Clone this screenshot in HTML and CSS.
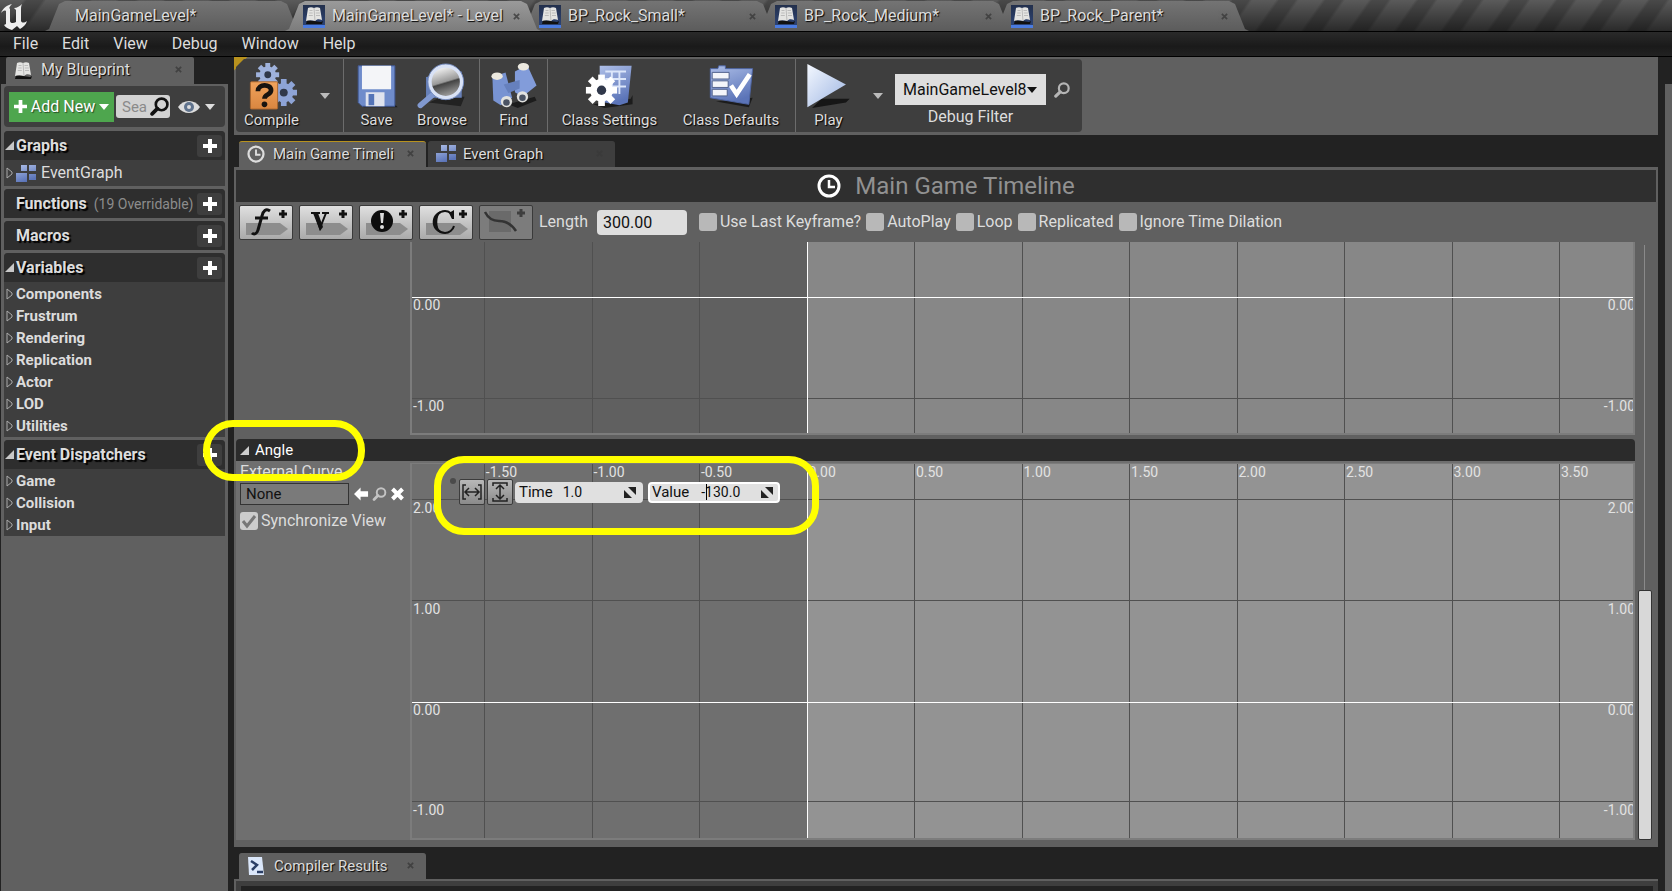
FILE: index.html
```html
<!DOCTYPE html>
<html lang="en">
<head>
<meta charset="utf-8">
<title>MainGameLevel - Level Blueprint</title>
<link rel="stylesheet" href="styles.css">
</head>
<body>
<svg class="defs" aria-hidden="true">
  <defs>
    <linearGradient id="blue" x1="0" y1="0" x2="0.4" y2="1"><stop offset="0" stop-color="#aebfe8"/><stop offset="1" stop-color="#5b74b8"/></linearGradient>
    <linearGradient id="pale" x1="0" y1="0" x2="1" y2="1"><stop offset="0" stop-color="#f4f8ff"/><stop offset="1" stop-color="#9db5e2"/></linearGradient>
    <linearGradient id="lens" x1="0.3" y1="0" x2="0.6" y2="1"><stop offset="0" stop-color="#fff"/><stop offset="0.5" stop-color="#999"/><stop offset="0.55" stop-color="#444"/><stop offset="1" stop-color="#aaa"/></linearGradient>
    <linearGradient id="orange" x1="0" y1="0" x2="0" y2="1"><stop offset="0" stop-color="#f0a35c"/><stop offset="1" stop-color="#d98640"/></linearGradient>
  </defs>
  <symbol id="book" viewBox="0 0 20 20">
    <path d="M3 15l14 2 2-1-1 3H2z" fill="#111"/>
    <path d="M4 3c2-1 4-1 6 0 2-1 4-1 6 0l2 12c-3-1-5-1-7 1-3-1-6-1-9 0z" fill="#e4e4e2"/>
    <path d="M10 3l1 13M5.500 5.500h3M5.200 8h3.500M4.800 10.500h4M11.500 5.500h3.500M11.800 8h4M12 10.500h4" stroke="#bbb" fill="none"/>
  </symbol>
  <symbol id="close" viewBox="0 0 8 8"><path d="M1 1l6 6M7 1L1 7" stroke="#3a3a3a" stroke-width="2"/></symbol>
  <symbol id="plus" viewBox="0 0 14 14"><path d="M7 0v14M0 7h14" stroke="currentColor" stroke-width="4"/></symbol>
  <symbol id="down" viewBox="0 0 10 6"><path d="M0 0h10L5 6z" fill="currentColor"/></symbol>
  <symbol id="open" viewBox="0 0 9 9"><path d="M9 0v9H0z" fill="currentColor"/></symbol>
  <symbol id="shut" viewBox="0 0 7 12"><path d="M1 1v10l5-4V5z" fill="none" stroke="#aaa"/></symbol>
  <symbol id="mag" viewBox="0 0 18 18"><circle cx="11" cy="7" r="5.500" fill="none" stroke="currentColor" stroke-width="2.500"/><path d="M7 11l-5 5" stroke="currentColor" stroke-width="3.500" stroke-linecap="round"/></symbol>
  <symbol id="clock" viewBox="0 0 24 24"><circle cx="12" cy="12" r="10" fill="none" stroke="currentColor" stroke-width="3"/><path d="M12 6v7h6" fill="none" stroke="currentColor" stroke-width="2.500"/></symbol>
  <symbol id="graph" viewBox="0 0 20 17"><path d="M5 0h6v6H5zM13 0h7v6h-7zM0 8h11v9H0zM13 9h7v6h-7z" fill="url(#blue)"/></symbol>
  <symbol id="spin" viewBox="0 0 12 11"><path d="M4 0h8v8zM0 3v8h8z" fill="#222"/></symbol>
  <symbol id="tag" viewBox="0 0 52 32"><path d="M6 17h34l8 6-8 6H6z" fill="#8d8d8d"/><path d="M43 4v8M39 8h8" stroke="#111" stroke-width="3"/></symbol>
  <symbol id="cog" viewBox="-12 -12 24 24"><g fill="currentColor"><rect x="-2.500" y="-12" width="5" height="24"/><rect x="-2.500" y="-12" width="5" height="24" transform="rotate(45)"/><rect x="-2.500" y="-12" width="5" height="24" transform="rotate(90)"/><rect x="-2.500" y="-12" width="5" height="24" transform="rotate(135)"/><circle r="8.500"/></g><circle r="3.500" fill="#30384a"/></symbol>
</svg>

<header class="titlebar">
  <svg class="logo" viewBox="0 0 28 28" aria-label="Unreal"><path d="M1 11C3 6 7 3 12 2 9 5 9 6 10 7v12c0 2 3 3 6 1V8l-2-2c3 0 6-2 8-4-1 2-1 4-1 6v11c1 2 3 2 6 0-1 4-4 6-7 8l-3-3-5 4c-3-1-6-2-8-5l2-1V9C4 8 3 9 1 11z" fill="#eee"/></svg>
  <nav class="wintabs">
    <a href="#" class="wt first"><span>MainGameLevel*</span></a>
    <a href="#" class="wt active"><i class="bk"><svg><use href="#book"/></svg></i><span>MainGameLevel* - Level</span><svg class="x"><use href="#close"/></svg></a>
    <a href="#" class="wt"><i class="bk"><svg><use href="#book"/></svg></i><span>BP_Rock_Small*</span><svg class="x"><use href="#close"/></svg></a>
    <a href="#" class="wt"><i class="bk"><svg><use href="#book"/></svg></i><span>BP_Rock_Medium*</span><svg class="x"><use href="#close"/></svg></a>
    <a href="#" class="wt"><i class="bk"><svg><use href="#book"/></svg></i><span>BP_Rock_Parent*</span><svg class="x"><use href="#close"/></svg></a>
  </nav>
</header>
<nav class="menu"><a href="#">File</a><a href="#">Edit</a><a href="#">View</a><a href="#">Debug</a><a href="#">Window</a><a href="#">Help</a></nav>

<div class="work">
  <aside class="side">
    <div class="sidetab"><svg class="bookicon"><use href="#book"/></svg><span>My Blueprint</span><svg class="x"><use href="#close"/></svg></div>
    <div class="sidebody">
      <div class="card sidetools">
        <button class="add"><svg class="pl"><use href="#plus"/></svg>Add New<svg class="dn"><use href="#down"/></svg></button>
        <label class="search"><input type="text" placeholder="Sea" aria-label="Search"><svg><use href="#mag"/></svg></label>
        <button class="eye" aria-label="View options"><svg viewBox="0 0 22 14"><path d="M0 7C5-1 17-1 22 7 17 15 5 15 0 7z" fill="#ddd"/><circle cx="11" cy="7" r="5" fill="#60738d"/><circle cx="11" cy="7" r="2" fill="#ddd"/></svg><svg class="dn"><use href="#down"/></svg></button>
      </div>
      <section class="card">
        <h2><svg class="op"><use href="#open"/></svg>Graphs<button aria-label="Add graph"><svg><use href="#plus"/></svg></button></h2>
        <p class="event"><svg class="sh"><use href="#shut"/></svg><svg class="gi"><use href="#graph"/></svg>EventGraph</p>
      </section>
      <section class="card"><h2><i class="op"></i>Functions<small>(19 Overridable)</small><button aria-label="Add function"><svg><use href="#plus"/></svg></button></h2></section>
      <section class="card"><h2><i class="op"></i>Macros<button aria-label="Add macro"><svg><use href="#plus"/></svg></button></h2></section>
      <section class="card">
        <h2><svg class="op"><use href="#open"/></svg>Variables<button aria-label="Add variable"><svg><use href="#plus"/></svg></button></h2>
        <ul>
          <li><svg class="sh"><use href="#shut"/></svg>Components</li><li><svg class="sh"><use href="#shut"/></svg>Frustrum</li><li><svg class="sh"><use href="#shut"/></svg>Rendering</li><li><svg class="sh"><use href="#shut"/></svg>Replication</li><li><svg class="sh"><use href="#shut"/></svg>Actor</li><li><svg class="sh"><use href="#shut"/></svg>LOD</li><li><svg class="sh"><use href="#shut"/></svg>Utilities</li>
        </ul>
      </section>
      <section class="card">
        <h2><svg class="op"><use href="#open"/></svg>Event Dispatchers<button aria-label="Add dispatcher"><svg><use href="#plus"/></svg></button></h2>
        <ul><li><svg class="sh"><use href="#shut"/></svg>Game</li><li><svg class="sh"><use href="#shut"/></svg>Collision</li><li><svg class="sh"><use href="#shut"/></svg>Input</li></ul>
      </section>
    </div>
    <div class="ring ring-name"></div>
  </aside>

  <main class="main">
    <div class="toolstrip">
      <div class="tools">
        <button class="tb w70"><svg viewBox="0 0 52 50"><svg x="9" y="0" width="25" height="25" color="#9fb2dc"><use href="#cog"/></svg><svg x="24" y="17" width="29" height="29" color="#8ea4d6"><use href="#cog"/></svg><rect x="3" y="20" width="29" height="29" rx="1" fill="url(#orange)" stroke="#a8642c"/><path d="M11 30c0-8 14-8 14-1 0 5-7 4-7 9" fill="none" stroke="#181410" stroke-width="5"/><circle cx="18" cy="44" r="3" fill="#181410"/></svg>Compile</button>
        <button class="more w36" aria-label="Compile options"><svg><use href="#down"/></svg></button>
        <button class="tb w66 sep"><svg viewBox="0 0 52 50"><path d="M8 43h36l4 4H12z" fill="#1c1c1c"/><path d="M6 3h39v43H10l-4-4z" fill="#6f8ccb" stroke="#415a98"/><path d="M10 3h31v25H10z" fill="#f4f5f8"/><path d="M14 31h20v15H14z" fill="#dfe3ee"/><path d="M17 33h6v12h-6z" fill="#5474b8"/></svg>Save</button>
        <button class="tb w66"><svg viewBox="0 0 52 50"><path d="M12 42l14-6 24 0-4 10z" fill="#222"/><path d="M9 15l38-6v28H9z" fill="#6780b8"/><path d="M17 33L3 45" stroke="#8199d0" stroke-width="6" stroke-linecap="round"/><circle cx="30" cy="20" r="17" fill="url(#lens)" stroke="#d9e2f6" stroke-width="4"/><circle cx="30" cy="20" r="19" fill="none" stroke="#7289bd"/></svg>Browse</button>
        <button class="tb w68 sep gap"><svg viewBox="0 0 52 50"><path d="M20 44l28-8 2 4-20 8z" fill="#1c1c1c"/><path d="M3 15l14-5 7 27-12 8-8-5z" fill="#7893d2"/><path d="M27 9l13-7 10 22-15 12-8-5z" fill="#829cda"/><path d="M15 23l17-5v9l-12 5z" fill="#6680bd"/><ellipse cx="8" cy="14" rx="6" ry="4" fill="#ece9df"/><ellipse cx="36" cy="4" rx="6" ry="4" fill="#ece9df"/><circle cx="18" cy="41" r="6" fill="#e2e2df"/><circle cx="18" cy="42" r="3.500" fill="#4b5363"/><circle cx="35" cy="36" r="6" fill="#e2e2df"/><circle cx="35" cy="37" r="3.500" fill="#4b5363"/></svg>Find</button>
        <button class="tb w124 sep"><svg viewBox="0 0 52 50"><path d="M8 44l40-6 2-4v10l-30 4z" fill="#1c1c1c"/><path d="M15 3h34l-4 39-9 3-21-4z" fill="url(#blue)"/><path d="M21 9h22M21 17h22M21 25h22M28 9v24M36 9v24" stroke="#dce6fa" stroke-width="2"/><svg x="0" y="12" width="34" height="34" color="#fff"><use href="#cog"/></svg></svg>Class Settings</button>
        <button class="tb w120"><svg viewBox="0 0 52 50"><path d="M10 41l35 6 4-10z" fill="#1c1c1c"/><path d="M4 6h8l1-3h7v3h29l-4 38L4 37z" fill="url(#blue)" stroke="#4f66a6"/><path d="M6 10h18v7H6zM6 19h17v7H6zM6 28h16v7H6z" fill="#f3f5fa" stroke="#4e5f8a"/><path d="M26 24l6 9L46 12" fill="none" stroke="#fff" stroke-width="5"/></svg>Class Defaults</button>
        <button class="tb w66 sep gap"><svg viewBox="0 0 52 50"><path d="M8 48l36-6 4-4-30 0z" fill="#161616"/><path d="M3 1l41 22L3 47z" fill="url(#pale)"/></svg>Play</button>
        <button class="more w34" aria-label="Play options"><svg><use href="#down"/></svg></button>
        <div class="filter">
          <div class="pick"><select id="dbg"><option>MainGameLevel8</option></select><svg><use href="#down"/></svg></div>
          <label for="dbg">Debug Filter</label>
        </div>
        <button class="find" aria-label="Find debug object"><svg><use href="#mag"/></svg></button>
      </div>
    </div>

    <nav class="doctabs">
      <a href="#" class="dt on"><svg class="ck"><use href="#clock"/></svg><span>Main Game Timeli</span><svg class="x"><use href="#close"/></svg></a>
      <a href="#" class="dt"><svg class="gi"><use href="#graph"/></svg><span>Event Graph</span><svg class="x"><use href="#close"/></svg></a>
    </nav>

    <div class="doc">
      <h1><svg><use href="#clock"/></svg>Main Game Timeline</h1>
      <div class="options">
        <button class="tag" aria-label="Add float track"><svg viewBox="0 0 52 32"><use href="#tag" width="52" height="32"/><path d="M30 5c-4-3-7 0-8 5l-4 14c-1 4-4 5-6 3M15 12h13" fill="none" stroke="#111" stroke-width="3"/></svg></button>
        <button class="tag" aria-label="Add vector track"><svg viewBox="0 0 52 32"><use href="#tag" width="52" height="32"/><path d="M11 7h9M22 7h7M15 7l5 15 6-15" fill="none" stroke="#111" stroke-width="2"/><path d="M13 7h5l5 14-3 4z" fill="#111"/></svg></button>
        <button class="tag" aria-label="Add event track"><svg viewBox="0 0 52 32"><use href="#tag" width="52" height="32"/><circle cx="22" cy="15" r="11" fill="#0d0d0d"/><path d="M20 7h4l-1 10h-2z" fill="#ddd"/><circle cx="22" cy="21" r="2" fill="#ddd"/></svg></button>
        <button class="tag" aria-label="Add color track"><svg viewBox="0 0 52 32"><use href="#tag" width="52" height="32"/><path d="M33 12c0-4-4-7-8-7-6 0-10 5-10 11s4 11 10 11c4 0 8-3 9-7" fill="none" stroke="#111" stroke-width="2"/><path d="M21 5c-11 3-11 19 0 22-5-6-5-16 0-22zM34 4v9h-2l-3-6z" fill="#111"/></svg></button>
        <button class="tag off" aria-label="Add external curve" disabled><svg viewBox="0 0 52 32"><path d="M9 5h22v21H9z" fill="#6a6a6a"/><path d="M5 6c3 6 7 9 14 9 8 0 13 4 17 10" fill="none" stroke="#333" stroke-width="2.500"/><path d="M41 3v8M37 7h8" stroke="#3e3e3e" stroke-width="3"/></svg></button>
        <label class="len">Length<input type="text" value="300.00"></label>
        <label class="ck1"><input type="checkbox">Use Last Keyframe?</label>
        <label class="ck1"><input type="checkbox">AutoPlay</label>
        <label class="ck1"><input type="checkbox">Loop</label>
        <label class="ck1"><input type="checkbox">Replicated</label>
        <label class="ck1"><input type="checkbox">Ignore Time Dilation</label>
      </div>

      <div class="scroller">
        <div class="tracks">
          <section class="track t1">
            <div class="info"></div>
            <svg class="plot p1" role="img" aria-label="Curve">
              <rect class="pos" x="32.400%" width="68%" height="100%"/>
              <g class="grid">
                <line x1="5.950%" x2="5.950%" y2="100%"/><line x1="14.760%" x2="14.760%" y2="100%"/><line x1="23.560%" x2="23.560%" y2="100%"/><line x1="41.170%" x2="41.170%" y2="100%"/><line x1="49.980%" x2="49.980%" y2="100%"/><line x1="58.780%" x2="58.780%" y2="100%"/><line x1="67.590%" x2="67.590%" y2="100%"/><line x1="76.390%" x2="76.390%" y2="100%"/><line x1="85.200%" x2="85.200%" y2="100%"/><line x1="94%" x2="94%" y2="100%"/>
                <line x2="100%" y1="156" y2="156"/>
              </g>
              <g class="zero"><line x1="32.370%" x2="32.370%" y2="100%"/><line x2="100%" y1="55" y2="55"/></g>
              <text x="1" y="68">0.00</text><text x="1" y="169">-1.00</text>
              <g text-anchor="end" class="right"><text x="100%" y="68" dx="2">0.00</text><text x="100%" y="169" dx="2">-1.00</text></g>
            </svg>
          </section>
          <h3><svg><use href="#open"/></svg>Angle</h3>
          <section class="track t2">
            <div class="info">
              <label for="curve">External Curve</label>
              <div class="asset"><input id="curve" type="text" value="None">
                <button aria-label="Use selected"><svg viewBox="0 0 16 14"><path d="M0 7l7-7v4h8v6H7v4z" fill="#fff"/></svg></button>
                <button aria-label="Browse"><svg class="gray"><use href="#mag"/></svg></button>
                <button aria-label="Clear"><svg viewBox="0 0 14 14"><path d="M2 2l10 10M12 2L2 12" stroke="#fff" stroke-width="4"/></svg></button>
              </div>
              <label class="ck1 sync"><input type="checkbox" checked>Synchronize View</label>
            </div>
            <div class="plotbox">
              <svg class="plot p2" role="img" aria-label="Angle curve">
                <rect class="pos" x="32.400%" width="68%" height="100%"/>
                <g class="grid">
                  <line x1="5.950%" x2="5.950%" y2="100%"/><line x1="14.760%" x2="14.760%" y2="100%"/><line x1="23.560%" x2="23.560%" y2="100%"/><line x1="41.170%" x2="41.170%" y2="100%"/><line x1="49.980%" x2="49.980%" y2="100%"/><line x1="58.780%" x2="58.780%" y2="100%"/><line x1="67.590%" x2="67.590%" y2="100%"/><line x1="76.390%" x2="76.390%" y2="100%"/><line x1="85.200%" x2="85.200%" y2="100%"/><line x1="94%" x2="94%" y2="100%"/>
                  <line x2="100%" y1="35" y2="35"/><line x2="100%" y1="136" y2="136"/><line x2="100%" y1="337" y2="337"/>
                </g>
                <g class="zero"><line x1="32.370%" x2="32.370%" y2="100%"/><line x2="100%" y1="238" y2="238"/></g>
                <text x="6.050%" y="13">-1.50</text><text x="14.860%" y="13">-1.00</text><text x="23.660%" y="13">-0.50</text><text x="32.470%" y="13">0.00</text><text x="41.270%" y="13">0.50</text><text x="50.080%" y="13">1.00</text><text x="58.880%" y="13">1.50</text><text x="67.690%" y="13">2.00</text><text x="76.490%" y="13">2.50</text><text x="85.300%" y="13">3.00</text><text x="94.100%" y="13">3.50</text>
                <text x="1" y="49">2.00</text><text x="1" y="150">1.00</text><text x="1" y="251">0.00</text><text x="1" y="351">-1.00</text>
                <g text-anchor="end"><text x="100%" y="49" dx="2">2.00</text><text x="100%" y="150" dx="2">1.00</text><text x="100%" y="251" dx="2">0.00</text><text x="100%" y="351" dx="2">-1.00</text></g>
                <circle cx="41" cy="17" r="3" fill="#4a4a4a"/>
              </svg>
              <div class="keytools">
                <button aria-label="Fit horizontally"><svg viewBox="0 0 22 20"><path d="M5 3H2v14h3M17 3h3v14h-3M5 10h12M8 6l-4 4 4 4M14 6l4 4-4 4" fill="none" stroke="#222" stroke-width="1.500"/></svg></button>
                <button aria-label="Fit vertically"><svg viewBox="0 0 22 20"><path d="M4 4V1h14v3M4 16v3h14v-3M11 4v12M7 7l4-4 4 4M7 13l4 4 4-4" fill="none" stroke="#222" stroke-width="1.500"/></svg></button>
                <label class="num">Time<input type="text" value="1.0"><svg><use href="#spin"/></svg></label>
                <label class="num hot">Value<input type="text" value="-130.0"><i class="caret"></i><svg><use href="#spin"/></svg></label>
              </div>
              <div class="ring ring-value"></div>
            </div>
          </section>
        </div>
        <div class="bar"><div class="rail"></div><div class="thumb"></div></div>
      </div>
    </div>

    <nav class="doctabs low">
      <a href="#" class="dt"><svg class="cr" viewBox="0 0 18 20"><path d="M1 1l14 0 2 18-15 0z" fill="#dbe7fa"/><path d="M4 5l6 4-5 5M10 16h6" fill="none" stroke="#2a3e66" stroke-width="2.500"/></svg><span>Compiler Results</span><svg class="x"><use href="#close"/></svg></a>
    </nav>
    <div class="results"><div></div></div>
  </main>
  <div class="edge"></div>
</div>
</body>
</html>
```
FILE: styles.css
```css
* { box-sizing: border-box; }
body { margin: 0; min-height: 100vh; display: flex; flex-direction: column; background: #222; color: #ddd; font: 15px/20px Roboto, sans-serif; overflow: hidden; }
button, input, select { font: inherit; color: inherit; border: 0; padding: 0; margin: 0; background: none; border-radius: 0; outline: 0; }
a { color: inherit; text-decoration: none; }
h1, h2, h3, p, ul { margin: 0; padding: 0; font: inherit; list-style: none; }
svg { display: block; flex: none; }
.defs { position: absolute; width: 0; height: 0; }
.x { width: 7px; height: 7px; opacity: .8; }

.titlebar { height: 32px; display: flex; border-bottom: 1px solid #000; background: linear-gradient(#0000, #0008), repeating-linear-gradient(125deg, #5a5a5a 0 19px, #494949 22px 35px, #5a5a5a 38px); }
.logo { width: 28px; height: 28px; margin: 2px 17px 0 0; }
.wintabs { display: flex; padding-top: 1px; }
.wt { width: 256px; height: 30px; margin-right: -20px; padding: 0 21px 0 18px; display: flex; align-items: center; background: linear-gradient(#747474, #5c5c5c); clip-path: polygon(0 100%, 4px 93%, 14px 10%, 20px 0, 236px 0, 242px 10%, 252px 93%, 256px 100%); font-size: 16px; text-shadow: 1px 1px 1px #000; }
.wt span { flex: 1; white-space: nowrap; }
.wt.first { width: 260px; padding-left: 30px; }
.wt.active { background: linear-gradient(#9a9a9a, #7c7c7c); z-index: 1; }
.bk { width: 22px; height: 23px; margin-right: 7px; background: linear-gradient(#23304c, #2c4272 85%, #4a7be0 86%); }
.bk svg { width: 22px; height: 20px; }
.menu { height: 25px; display: flex; gap: 24px; padding: 0 13px; align-items: center; font-size: 16px; background: linear-gradient(#2a2a2a, #1a1a1a 60%, #222); border-bottom: 1px solid #000; }

.work { flex: 1; display: flex; }
.side { width: 227px; flex: none; display: flex; flex-direction: column; margin: 0 6px 0 1px; position: relative; }
.sidetab { width: 188px; height: 27px; margin-left: 5px; padding: 0 12px 2px 7px; display: flex; align-items: center; background: #606060; border-radius: 2px 2px 0 0; text-shadow: 1px 1px 1px #000; font-size: 16px; }
.sidetab span { flex: 1; }
.bookicon { width: 20px; height: 20px; margin-right: 8px; }
.sidebody { flex: 1; background: #606060; padding: 2px 3px; display: flex; flex-direction: column; gap: 3px; }
.card { background: #3e3e3e; border-radius: 4px 4px 0 0; }
.sidetools { height: 41px; margin-bottom: 1px; padding: 0 5px; display: flex; align-items: center; border-radius: 4px; }
.add { width: 105px; height: 30px; background: #4ea64e; color: #fff; display: flex; align-items: center; justify-content: center; gap: 4px; font-size: 16px; text-shadow: 1px 1px 1px #0008; white-space: nowrap; }
.pl { width: 13px; height: 13px; }
.dn { width: 10px; height: 6px; }
.search { width: 54px; height: 23px; margin: 0 8px 0 2px; display: flex; align-items: center; background: #d2d2d2; border-radius: 3px; color: #111; }
.search input { width: 34px; padding-left: 6px; }
.search input::placeholder { color: #8a8a8a; }
.search svg { width: 19px; height: 19px; }
.eye { display: flex; align-items: center; gap: 5px; }
.eye svg:first-child { width: 22px; height: 14px; }
h2 { height: 29px; padding-right: 3px; display: flex; align-items: center; background: #2e2e2e; border-radius: 4px 4px 0 0; font-weight: 700; font-size: 16px; text-shadow: 2px 2px 1px #000; white-space: nowrap; }
.op { width: 9px; height: 9px; margin: 0 2px 0 1px; color: #c8c8c8; }
h2 small { font-weight: 400; font-size: 14px; color: #8c8c8c; margin: 0 -8px 0 7px; text-shadow: none; }
h2 button { width: 25px; height: 22px; margin-left: auto; flex: none; background: #3e3e3e; border-radius: 3px; display: grid; place-items: center; color: #fff; }
h2 button svg { width: 14px; height: 14px; }
.sh { width: 7px; height: 12px; margin: 0 3px 0 2px; }
.event { height: 26px; display: flex; align-items: center; font-size: 16px; }
.gi { width: 20px; height: 17px; margin-right: 5px; }
ul { padding-top: 1px; }
li { height: 22px; display: flex; align-items: center; font-weight: 700; color: #dcdcdc; }

.main { flex: 1; min-width: 0; display: flex; flex-direction: column; }
.toolstrip { height: 78px; background: linear-gradient(135deg, #b8921e 9px, #606060 10px); padding: 2px 2px 3px; display: flex; }
.tools { display: flex; background: #3e3e3e; border-radius: 4px; padding-right: 12px; clip-path: polygon(8px 0, 100% 0, 100% 100%, 0 100%, 0 8px); }
.tb { display: flex; flex-direction: column; align-items: center; justify-content: flex-start; padding-top: 4px; text-shadow: 1px 1px 1px #000; white-space: nowrap; font-size: 15px; }
.tb > svg { width: 50px; height: 47px; }
.sep { border-left: 1px solid #6c6c6c; }
.gap { margin-left: 4px; }
.w34 { width: 34px; } .w36 { width: 36px; } .w66 { width: 66px; } .w68 { width: 68px; } .w70 { width: 71px; } .w120 { width: 120px; } .w124 { width: 124px; }
.more { color: #bbb; display: grid; place-items: center; }
.more svg { width: 10px; height: 6px; }
.filter { display: flex; flex-direction: column; align-items: center; padding-top: 15px; gap: 2px; font-size: 16px; }
.pick { display: flex; align-items: center; background: #dedede; color: #111; padding-right: 9px; height: 31px; }
.pick select { appearance: none; width: 132px; padding-left: 8px; height: 31px; }
.pick svg { width: 10px; height: 6px; }
.find { color: #b5b5b5; padding: 0 0 11px 8px; }
.find svg { width: 16px; height: 16px; }

.doctabs { display: flex; gap: 2px; padding: 6px 5px 0; }
.dt { width: 187px; height: 26px; padding: 0 12px 0 8px; display: flex; align-items: center; background: #3e3e3e; border-top: 1px solid #3e3e3e; border-radius: 3px 3px 0 0; text-shadow: 1px 1px 1px #000; font-size: 15px; padding-bottom: 2px; }
.dt span { flex: 1; white-space: nowrap; }
.dt.on, .low .dt { background: #606060; border-color: #606060; }
.dt.on { border-top-color: #b8921e; }
.ck { width: 18px; height: 18px; margin-right: 8px; }
.doctabs .gi { margin-right: 7px; }
.cr { width: 18px; height: 20px; margin-right: 9px; }
.doc { background: #606060; padding: 3px 2px 0; flex: 1; }
h1 { height: 32px; display: flex; align-items: center; justify-content: center; gap: 14px; background: #2f2f2f; color: #919191; font-size: 24px; }
h1 svg { width: 24px; height: 24px; color: #fff; }
.options { height: 40px; padding: 0 3px; display: flex; align-items: center; font-size: 16px; }
.tag { width: 54px; height: 35px; margin-right: 6px; background: linear-gradient(#e0e0e0, #aaa); border: 1px solid #3a3a3a; border-radius: 2px; }
.tag svg { width: 52px; height: 32px; }
.tag.off { background: #7c7c7c; }
.len { display: flex; align-items: center; gap: 9px; margin-right: 12px; }
.len input { width: 90px; height: 25px; padding-left: 6px; background: #dedede; color: #111; border-radius: 4px; }
.ck1 { display: flex; align-items: center; gap: 3px; margin-right: 5px; white-space: nowrap; font-size: 16px; }
.ck1 input { appearance: none; width: 18px; height: 18px; background: #b8b8b8; border-radius: 3px; }

.scroller { display: grid; grid-template-columns: 1fr 21px; }
.track { display: grid; grid-template-columns: 174px 1fr; }
.t1 { background: #606060; padding-bottom: 4px; }
.t2 { background: #6f6f6f; padding-top: 2px; border-bottom: 6px solid #606060; }
.plot { width: 100%; display: block; border: 2px solid #7c7c7c; border-top-width: 0; font-size: 14px; fill: #e2e2e2; overflow: hidden; }
.p1 { height: 193px; }
.p2 { height: 377px; border-top-width: 1px; }
.pos { fill: #878787; }
.p2 .pos { fill: #939393; }
.grid line { stroke: #505050; shape-rendering: crispEdges; }
.zero line { stroke: #fff; shape-rendering: crispEdges; }
h3 { height: 22px; display: flex; align-items: center; gap: 6px; padding-left: 4px; background: #2b2b2b; border-radius: 4px 4px 0 0; color: #fff; }
h3 svg { width: 9px; height: 9px; color: #ccc; }
.info { padding: 0 4px; }
.info > label:first-child { display: block; height: 19px; line-height: 18px; font-size: 16px; }
.asset { display: flex; align-items: center; gap: 3px; margin: 1px 0 6px; height: 22px; }
.asset input { width: 109px; height: 22px; margin-right: 2px; padding-left: 5px; border: 1px solid #333; background: #7a7a7a; color: #111; }
.asset svg { width: 15px; height: 14px; }
.gray { color: #c4c4c4; }
.sync input:checked { background: #ccc url("data:image/svg+xml,%3Csvg xmlns='http://www.w3.org/2000/svg' viewBox='0 0 18 18'%3E%3Cpath d='M3 9l4 5 8-10' fill='none' stroke='%23777' stroke-width='3'/%3E%3C/svg%3E"); }
.plotbox { position: relative; }
.keytools { position: absolute; left: 49px; top: 16px; display: flex; align-items: center; gap: 2px; color: #111; }
.keytools button { width: 26px; height: 26px; padding: 2px 1px; background: linear-gradient(#b8b8b8, #8a8a8a); border: 1px solid #3c3c3c; border-radius: 2px; }
.keytools button svg { width: 22px; height: 20px; }
.num { width: 128px; height: 21px; padding: 0 7px 0 4px; display: flex; align-items: center; gap: 10px; background: #e0e0e0; border-radius: 4px; position: relative; }
.num input { width: 0; flex: 1; font-size: 14px; }
.num svg { width: 12px; height: 11px; }
.num.hot { width: 132px; margin-left: 3px; border: 2px solid #fff; padding: 0 5px 0 2px; gap: 12px; }
.caret { position: absolute; left: 56px; top: 0; width: 1px; height: 16px; background: #000; }
.bar { display: flex; flex-direction: column; align-items: center; padding: 3px 2px 6px 0; }
.rail { width: 1px; flex: 347; background: #8a8a8a; }
.thumb { width: 14px; flex: 249; background: #d8d8d8; border: 1px solid #333; border-radius: 2px; }
.results { height: 12px; background: #3e3e3e; border-top: 2px solid #606060; border-left: 2px solid #606060; padding: 5px 5px 0; }
.results div { height: 5px; background: #222; }
.edge { width: 7px; margin: 27px 0 0 7px; background: #606060; }
.ring { position: absolute; border: 7px solid #ff0; border-radius: 30px; z-index: 5; pointer-events: none; }
.ring-name { left: 202px; top: 363px; width: 162px; height: 61px; }
.ring-value { left: 24px; top: -7px; width: 385px; height: 79px; }
```
